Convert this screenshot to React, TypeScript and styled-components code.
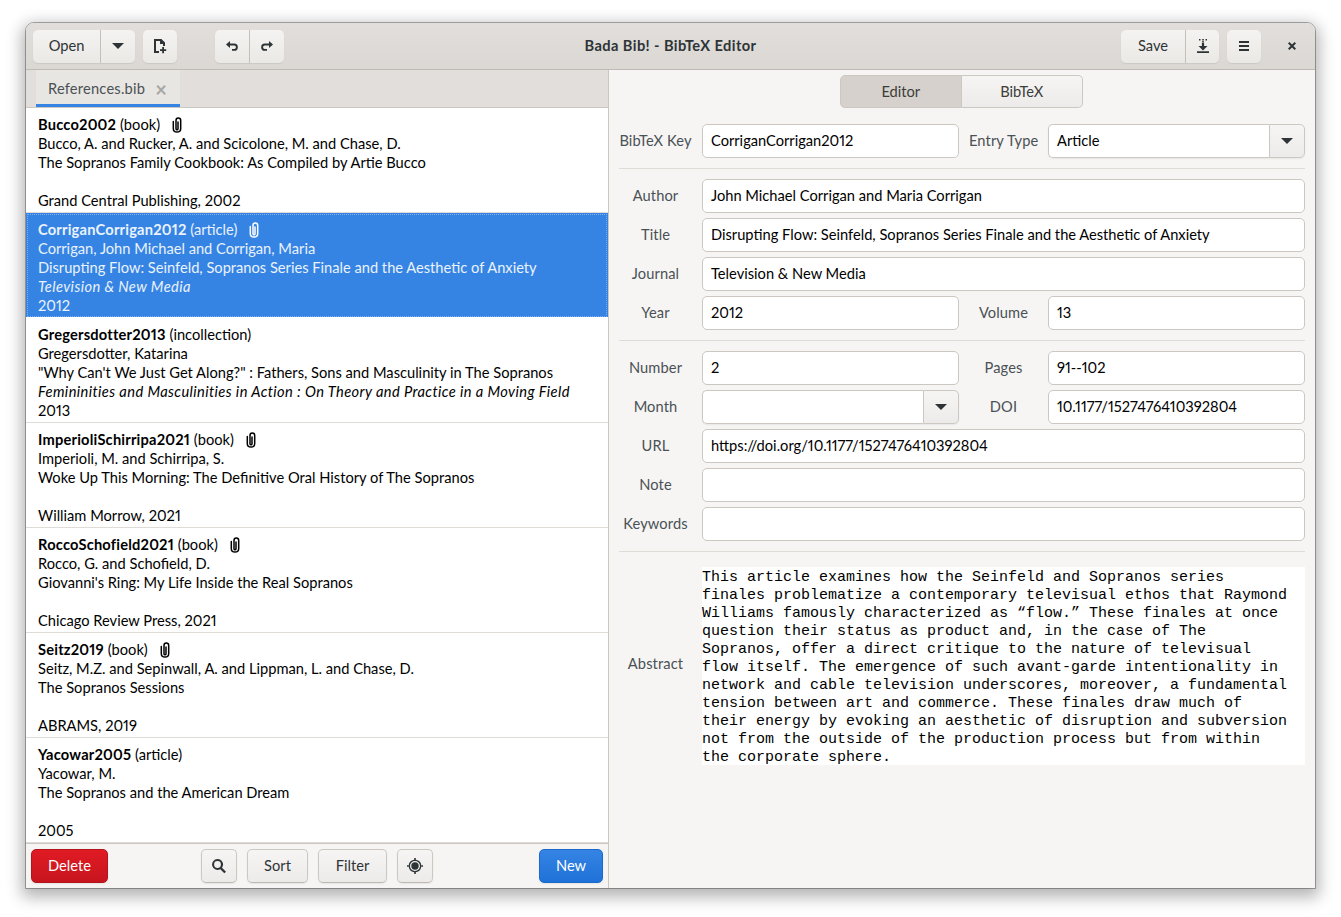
import React from "react"
import styled, { createGlobalStyle, css } from "styled-components"

const uiFont = `"Lato", "Noto Sans", sans-serif`

const GlobalStyle = createGlobalStyle`
  html, body {
    margin: 0;
    height: 100%;
    background: #fff;
  }
  body {
    font-family: ${uiFont};
    font-size: 14.67px;
    font-variant-numeric: proportional-nums;
    color: #2e3436;
  }
  * {
    box-sizing: border-box;
  }
`

const entries = [
  { key: "Bucco2002", type: "book", attach: true, author: "Bucco, A. and Rucker, A. and Scicolone, M. and Chase, D.", title: "The Sopranos Family Cookbook: As Compiled by Artie Bucco", source: "", last: "Grand Central Publishing, 2002" },
  { key: "CorriganCorrigan2012", type: "article", attach: true, selected: true, author: "Corrigan, John Michael and Corrigan, Maria", title: "Disrupting Flow: Seinfeld, Sopranos Series Finale and the Aesthetic of Anxiety", source: "Television & New Media", last: "2012" },
  { key: "Gregersdotter2013", type: "incollection", author: "Gregersdotter, Katarina", title: "\"Why Can't We Just Get Along?\" : Fathers, Sons and Masculinity in The Sopranos", source: "Femininities and Masculinities in Action : On Theory and Practice in a Moving Field", last: "2013" },
  { key: "ImperioliSchirripa2021", type: "book", attach: true, author: "Imperioli, M. and Schirripa, S.", title: "Woke Up This Morning: The Definitive Oral History of The Sopranos", source: "", last: "William Morrow, 2021" },
  { key: "RoccoSchofield2021", type: "book", attach: true, author: "Rocco, G. and Schofield, D.", title: "Giovanni's Ring: My Life Inside the Real Sopranos", source: "", last: "Chicago Review Press, 2021" },
  { key: "Seitz2019", type: "book", attach: true, author: "Seitz, M.Z. and Sepinwall, A. and Lippman, L. and Chase, D.", title: "The Sopranos Sessions", source: "", last: "ABRAMS, 2019" },
  { key: "Yacowar2005", type: "article", author: "Yacowar, M.", title: "The Sopranos and the American Dream", source: "", last: "2005" },
]

const abstractLines = [
  "This article examines how the Seinfeld and Sopranos series",
  "finales problematize a contemporary televisual ethos that Raymond",
  "Williams famously characterized as “flow.” These finales at once",
  "question their status as product and, in the case of The",
  "Sopranos, offer a direct critique to the nature of televisual",
  "flow itself. The emergence of such avant-garde intentionality in",
  "network and cable television underscores, moreover, a fundamental",
  "tension between art and commerce. These finales draw much of",
  "their energy by evoking an aesthetic of disruption and subversion",
  "not from the outside of the production process but from within",
  "the corporate sphere.",
]

const Icon: React.FC<{ children: React.ReactNode }> = ({ children }) => (
  <svg width="16" height="16" viewBox="0 0 16 16" fill="#2e3436">{children}</svg>
)

const PanDown = () => <Icon><path d="M2 5h12L8 11z" /></Icon>
const NewDoc = () => (
  <Icon>
    <path d="M2 1h7.400L13 4.600V8h-2V6H8V3H4v10h3v2H2z" />
    <path d="M10.200 9h1.800v2.200h2.200V13H12v2.200h-1.800V13H8v-1.800h2.200z" />
  </Icon>
)
const Undo = () => (
  <Icon>
    <path d="M6 3 2 6.500 6 10z" />
    <path d="M5 6.500h5.200a2.700 2.700 0 0 1 0 5.400H8" fill="none" stroke="#2e3436" strokeWidth="1.900" />
  </Icon>
)
const Redo = () => (
  <Icon>
    <path d="M10 3l4 3.500L10 10z" />
    <path d="M11 6.500H5.800a2.700 2.700 0 0 0 0 5.400H8" fill="none" stroke="#2e3436" strokeWidth="1.900" />
  </Icon>
)
const SaveAs = () => (
  <Icon>
    <path d="M2 13.200h12V15H2z" />
    <path d="M6.900 4.500h2.200V8H12.500L8 12.400 3.500 8h3.400z" />
    <path d="M4 1h1.500v1.500H4zM7.200 1h1.600v1.500H7.200zM10.500 1H12v1.500h-1.500zM7.200 3h1.600v1H7.200z" />
  </Icon>
)
const Menu = () => <Icon><path d="M3 3h10v2H3zM3 7h10v2H3zM3 11h10v2H3z" /></Icon>
const Close = () => <Icon><path d="M4 5.400 5.400 4 8 6.600 10.600 4 12 5.400 9.400 8 12 10.600 10.600 12 8 9.400 5.400 12 4 10.600 6.600 8z" /></Icon>
const Search = () => (
  <Icon>
    <path fillRule="evenodd" d="M6.500 1a5.500 5.500 0 0 1 4.500 8.700l4 4-1.700 1.600-4-4A5.500 5.500 0 1 1 6.500 1zm0 2.100a3.400 3.400 0 1 0 0 6.800 3.400 3.400 0 0 0 0-6.800z" />
  </Icon>
)
const Locate = () => (
  <Icon>
    <path fillRule="evenodd" d="M7.200 0h1.600v1.700A6.400 6.400 0 0 1 14.300 8a6.400 6.400 0 0 1-5.500 6.300V16H7.200v-1.700A6.400 6.400 0 0 1 1.700 8a6.400 6.400 0 0 1 5.500-6.300zM8 3a5 5 0 1 0 0 10A5 5 0 0 0 8 3z" />
    <path d="M0 7.200h1.800v1.600H0zM14.200 7.200H16v1.600h-1.800z" />
    <circle cx="8" cy="8" r="3.700" />
  </Icon>
)
const Clip: React.FC<{ color: string }> = ({ color }) => (
  <svg width="10" height="16" viewBox="0 0 10 16" fill="none" stroke={color} strokeWidth="1.500" strokeLinecap="round">
    <path d="M1.300 4.500v7c0 2.200 1.500 3.600 3.700 3.600s3.700-1.400 3.700-3.600V3.500C8.700 2 7.700 1 6.300 1S4 2 4 3.500v8.200c0 .7.400 1.100 1 1.100s1-.4 1-1.100V5" />
  </svg>
)

export default function App() {
  return (
    <Page>
      <GlobalStyle />
      <Window>
        <HeaderBar>
          <HeaderSide>
            <ButtonGroup>
              <HeaderButton $wide={67}>Open</HeaderButton>
              <HeaderButton $wide={35}><PanDown /></HeaderButton>
            </ButtonGroup>
            <HeaderButton $wide={34} $solo><NewDoc /></HeaderButton>
            <ButtonGroup $gapLeft={30}>
              <HeaderButton $wide={34}><Undo /></HeaderButton>
              <HeaderButton $wide={35}><Redo /></HeaderButton>
            </ButtonGroup>
          </HeaderSide>
          <HeaderTitle>Bada Bib! - BibTeX Editor</HeaderTitle>
          <HeaderSide>
            <ButtonGroup>
              <HeaderButton $wide={64}>Save</HeaderButton>
              <HeaderButton $wide={34}><SaveAs /></HeaderButton>
            </ButtonGroup>
            <HeaderButton $wide={34} $solo><Menu /></HeaderButton>
            <CloseButton><Close /></CloseButton>
          </HeaderSide>
        </HeaderBar>
        <Body>
          <LeftPane>
            <TabBar>
              <Tab>
                References.bib
                <TabClose>×</TabClose>
              </Tab>
            </TabBar>
            <EntryList>
              {entries.map((e) => (
                <EntryRow key={e.key} $selected={e.selected}>
                  <EntryHead>
                    <strong>{e.key}</strong> ({e.type})
                    {e.attach && <AttachSlot><Clip color={e.selected ? "#fff" : "#000"} /></AttachSlot>}
                  </EntryHead>
                  <EntryLine>{e.author}</EntryLine>
                  <EntryLine>{e.title}</EntryLine>
                  <EntryLine><em>{e.source}</em></EntryLine>
                  <EntryLine>{e.last}</EntryLine>
                </EntryRow>
              ))}
            </EntryList>
            <Footer>
              <ActionButton $tone="danger">Delete</ActionButton>
              <FooterCenter>
                <ActionButton $w={36}><Search /></ActionButton>
                <ActionButton $w={61}>Sort</ActionButton>
                <ActionButton $w={69}>Filter</ActionButton>
                <ActionButton $w={36}><Locate /></ActionButton>
              </FooterCenter>
              <ActionButton $tone="primary">New</ActionButton>
            </Footer>
          </LeftPane>
          <RightPane>
            <Switcher>
              <SwitchButton $active>Editor</SwitchButton>
              <SwitchButton>BibTeX</SwitchButton>
            </Switcher>
            <FormGrid>
              <Label>BibTeX Key</Label>
              <Field>CorriganCorrigan2012</Field>
              <Label>Entry Type</Label>
              <Combo>
                <ComboText>Article</ComboText>
                <ComboArrow><PanDown /></ComboArrow>
              </Combo>
            </FormGrid>
            <Divider />
            <FormGrid>
              <Label>Author</Label>
              <Field $full>John Michael Corrigan and Maria Corrigan</Field>
              <Label>Title</Label>
              <Field $full>Disrupting Flow: Seinfeld, Sopranos Series Finale and the Aesthetic of Anxiety</Field>
              <Label>Journal</Label>
              <Field $full>Television &amp; New Media</Field>
              <Label>Year</Label>
              <Field>2012</Field>
              <Label>Volume</Label>
              <Field>13</Field>
            </FormGrid>
            <Divider />
            <FormGrid>
              <Label>Number</Label>
              <Field>2</Field>
              <Label>Pages</Label>
              <Field>91--102</Field>
              <Label>Month</Label>
              <Combo>
                <ComboText />
                <ComboArrow><PanDown /></ComboArrow>
              </Combo>
              <Label>DOI</Label>
              <Field>10.1177/1527476410392804</Field>
              <Label>URL</Label>
              <Field $full>https://doi.org/10.1177/1527476410392804</Field>
              <Label>Note</Label>
              <Field $full />
              <Label>Keywords</Label>
              <Field $full />
            </FormGrid>
            <Divider />
            <AbstractRow>
              <AbstractLabel>Abstract</AbstractLabel>
              <AbstractText>
                {abstractLines.map((l) => <div key={l}>{l}</div>)}
              </AbstractText>
            </AbstractRow>
          </RightPane>
        </Body>
      </Window>
    </Page>
  )
}

const raised = css`
  border: 1px solid #cdc7c2;
  border-bottom-color: #bfb8b1;
  background: linear-gradient(to bottom, #f6f5f4, #edebe9);
  box-shadow: 0 1px 2px rgba(0, 0, 0, 0.07);
  color: #2e3436;
`

const Page = styled.div`
  width: 1341px;
  height: 917px;
  padding: 23px 26px 29px;
  overflow: hidden;
`
const Window = styled.div`
  height: 865px;
  display: flex;
  flex-direction: column;
  border-radius: 8px 8px 0 0;
  overflow: hidden;
  background: #f6f5f4;
  outline: 1px solid rgba(0, 0, 0, 0.3);
  box-shadow: 0 5px 16px 4px rgba(0, 0, 0, 0.3);
`
const HeaderBar = styled.div`
  height: 47px;
  flex: none;
  display: flex;
  align-items: center;
  justify-content: space-between;
  padding: 0 6px 0 7px;
  background: linear-gradient(to bottom, #e1dedb, #dbd8d4);
  border-bottom: 1px solid #c0bab4;
  position: relative;
`
const HeaderSide = styled.div`
  display: flex;
  align-items: center;
  gap: 8px;
`
const ButtonGroup = styled.div<{ $gapLeft?: number }>`
  display: flex;
  margin-left: ${(p) => p.$gapLeft || 0}px;
  border-radius: 5px;
  box-shadow: 0 1px 1px rgba(0, 0, 0, 0.08);
  & > button {
    border-radius: 0;
  }
  & > button:first-child {
    border-radius: 5px 0 0 5px;
  }
  & > button:last-child {
    border-radius: 0 5px 5px 0;
    border-left: 1px solid #c4bfb9;
  }
`
const HeaderButton = styled.button<{ $wide: number; $solo?: boolean }>`
  width: ${(p) => p.$wide}px;
  height: 33px;
  padding: 0 0 1px;
  display: flex;
  align-items: center;
  justify-content: center;
  border: none;
  border-radius: ${(p) => (p.$solo ? "5px" : "0")};
  background: linear-gradient(to bottom, #f4f3f1, #ebe9e6);
  box-shadow: ${(p) => (p.$solo ? "0 1px 1px rgba(0, 0, 0, 0.08)" : "none")};
  font: inherit;
  color: #2e3436;
`
const HeaderTitle = styled.div`
  position: absolute;
  left: 0;
  right: 0;
  top: 14px;
  text-align: center;
  font-weight: 700;
  letter-spacing: 0.4px;
  pointer-events: none;
`
const CloseButton = styled.div`
  width: 34px;
  height: 33px;
  margin-left: 6px;
  display: flex;
  align-items: center;
  justify-content: center;
`
const Body = styled.div`
  flex: 1;
  min-height: 0;
  display: flex;
`
const LeftPane = styled.div`
  width: 583px;
  flex: none;
  display: flex;
  flex-direction: column;
  border-right: 1px solid #cdc7c2;
`
const TabBar = styled.div`
  height: 38px;
  flex: none;
  padding-left: 10px;
  display: flex;
  background: #e1dedb;
  border-bottom: 1px solid #cdc7c2;
`
const Tab = styled.div`
  width: 144px;
  padding: 3px 13px 0 12px;
  display: flex;
  align-items: center;
  justify-content: space-between;
  background: #e8e6e3;
  border-bottom: 3px solid #3584e4;
  color: #4a5154;
  letter-spacing: 0.2px;
`
const TabClose = styled.span`
  font-size: 20px;
  font-weight: 700;
  color: #a6a6a4;
`
const EntryList = styled.div`
  flex: 1;
  min-height: 0;
  overflow: hidden;
  background: #fff;
  color: #000;
`
const EntryRow = styled.div<{ $selected?: boolean }>`
  height: 105px;
  padding: 7px 12px 0;
  border-bottom: 1px solid #dfdcd8;
  line-height: 19px;
  ${(p) =>
    p.$selected &&
    css`
      background: #3584e4;
      color: #eaf2fc;
      outline: 1px dotted rgba(255, 255, 255, 0.35);
      outline-offset: -2px;
      border-bottom-color: #fff;
    `}
`
const EntryHead = styled.div`
  height: 19px;
  display: flex;
  align-items: center;
  white-space: pre;
  strong {
    font-weight: 700;
    letter-spacing: 0.2px;
  }
`
const AttachSlot = styled.span`
  margin-left: 12px;
  display: flex;
`
const EntryLine = styled.div`
  height: 19px;
  white-space: nowrap;
  em {
    letter-spacing: 0.4px;
  }
`
const Footer = styled.div`
  height: 45px;
  flex: none;
  padding: 5px 5px 5px 5px;
  display: grid;
  grid-template-columns: 1fr auto 1fr;
  border-top: 1px solid #cdc7c2;
  background: #f6f5f4;
  & > button:last-child {
    justify-self: end;
  }
`
const FooterCenter = styled.div`
  display: flex;
  gap: 10px;
`
const ActionButton = styled.button<{ $w?: number; $tone?: "danger" | "primary" }>`
  width: ${(p) => (p.$w ? `${p.$w}px` : p.$tone === "danger" ? "77px" : "64px")};
  height: 34px;
  padding: 0 0 1px;
  display: flex;
  align-items: center;
  justify-content: center;
  border-radius: 5px;
  font: inherit;
  ${raised}
  ${(p) =>
    p.$tone === "danger" &&
    css`
      background: linear-gradient(to bottom, #e01b24, #c7151e);
      border-color: #b2161d;
      color: #fff;
    `}
  ${(p) =>
    p.$tone === "primary" &&
    css`
      background: linear-gradient(to bottom, #3584e4, #1f72d8);
      border-color: #1b6acb;
      color: #fff;
    `}
`
const RightPane = styled.div`
  flex: 1;
  min-width: 0;
  padding: 5px 10px 0;
  display: flex;
  flex-direction: column;
`
const Switcher = styled.div`
  align-self: center;
  display: flex;
  margin-right: 1px;
  margin-bottom: 16px;
`
const SwitchButton = styled.div<{ $active?: boolean }>`
  width: 121.500px;
  height: 33px;
  padding-bottom: 1px;
  display: flex;
  align-items: center;
  justify-content: center;
  border: 1px solid #cdc7c2;
  color: #3d3d3a;
  background: ${(p) => (p.$active ? "#d6d1cd" : "linear-gradient(to bottom, #f6f5f4, #edebe9)")};
  border-radius: ${(p) => (p.$active ? "5px 0 0 5px" : "0 5px 5px 0")};
  border-left-width: ${(p) => (p.$active ? "1px" : "0")};
`
const FormGrid = styled.div`
  display: grid;
  grid-template-columns: 73px 257px 69px 257px;
  column-gap: 10px;
  row-gap: 5px;
  grid-auto-rows: 34px;
`
const Label = styled.div`
  align-self: center;
  padding-bottom: 2px;
  text-align: center;
  white-space: nowrap;
  color: #4a5154;
  letter-spacing: 0.1px;
`
const AbstractLabel = styled(Label)`
  padding-bottom: 6px;
`
const Field = styled.div<{ $full?: boolean }>`
  ${(p) => p.$full && "grid-column: 2 / -1;"}
  height: 34px;
  padding: 0 8px 2px;
  display: flex;
  align-items: center;
  border: 1px solid #cdc7c2;
  border-radius: 5px;
  background: #fff;
  color: #000;
  white-space: nowrap;
`
const Combo = styled.div`
  height: 34px;
  display: flex;
  border-radius: 5px;
  box-shadow: 0 1px 2px rgba(0, 0, 0, 0.06);
`
const ComboText = styled.div`
  flex: 1;
  padding: 0 8px 2px;
  display: flex;
  align-items: center;
  border: 1px solid #cdc7c2;
  border-right: none;
  border-radius: 5px 0 0 5px;
  background: #fff;
  color: #000;
`
const ComboArrow = styled.div`
  width: 36px;
  display: flex;
  align-items: center;
  justify-content: center;
  border: 1px solid #cdc7c2;
  border-radius: 0 5px 5px 0;
  background: linear-gradient(to bottom, #f6f5f4, #edebe9);
`
const Divider = styled.div`
  height: 1px;
  margin: 10px 0;
  background: #dfdcd8;
`
const AbstractRow = styled.div`
  margin-top: 5px;
  display: grid;
  grid-template-columns: 73px 1fr;
  column-gap: 10px;
`
const AbstractText = styled.div`
  height: 198px;
  padding-top: 2px;
  background: #fff;
  color: #000;
  font-family: "Liberation Mono", monospace;
  font-size: 15px;
  line-height: 18px;
  white-space: pre;
`
